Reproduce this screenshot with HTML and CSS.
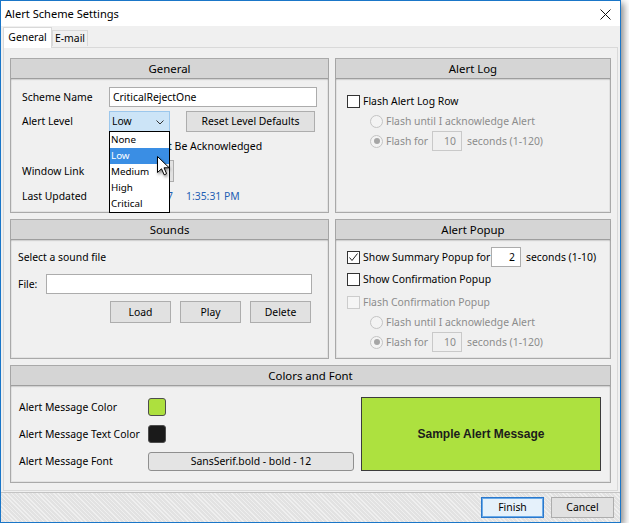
FILE: index.html
```html
<!DOCTYPE html>
<html>
<head>
<meta charset="utf-8">
<title>Alert Scheme Settings</title>
<link rel="stylesheet" href="styles.css">
</head>
<body>
<div class="window">
  <div class="titlebar">
    <span class="title">Alert Scheme Settings</span>
    <svg class="close" width="11" height="11" viewBox="0 0 11 11"><path d="M0.5 0.5 L10.5 10.5 M10.5 0.5 L0.5 10.5" stroke="#111" stroke-width="1" fill="none"/></svg>
  </div>
  <div class="tabs">
    <div class="tab active">General</div>
    <div class="tab">E-mail</div>
  </div>
  <div class="tabpanel">
    <div class="grid">
      <section class="panel">
        <div class="phead">General</div>
        <div class="gen-body">
          <span class="lbl">Scheme Name</span>
          <div class="tf name">CriticalRejectOne</div>

          <span class="lbl">Alert Level</span>
          <div class="hrow">
            <div class="combo"><span>Low</span><svg width="8" height="5" viewBox="0 0 8 5"><polyline points="0.5,0.5 4,4 7.5,0.5" fill="none" stroke="#333" stroke-width="1"/></svg></div>
            <div class="btn reset">Reset Level Defaults</div>
          </div>

          <span class="lbl"></span>
          <div class="hrow ackrow"><span class="cb"></span><span class="cbtext ack">Must Be Acknowledged</span></div>

          <span class="lbl">Window Link</span>
          <div class="hrow"><div class="btn link"></div></div>

          <span class="lbl">Last Updated</span>
          <div class="hrow blue"><span class="date">10/16/2017</span><span class="time">1:35:31 PM</span></div>
        </div>
        <div class="dropdown">
          <div class="opt">None</div>
          <div class="opt sel">Low</div>
          <div class="opt">Medium</div>
          <div class="opt">High</div>
          <div class="opt">Critical</div>
        </div>
        <svg class="cursor" width="14" height="21" viewBox="0 0 14 21"><path d="M0.5 0.5 L0.5 16.5 L4.5 12.8 L7.2 18.8 L9.6 17.7 L7 11.8 L12.2 11.8 Z" fill="#fff" stroke="#000" stroke-width="1" stroke-linejoin="miter"/></svg>
      </section>

      <section class="panel">
        <div class="phead">Alert Log</div>
        <div class="log-body">
          <div class="row r19"><span class="cb"></span><span class="cbtext">Flash Alert Log Row</span></div>
          <div class="row r19 indent mt1"><span class="rb"></span><span class="rbtext dis">Flash until I acknowledge Alert</span></div>
          <div class="row r20 indent"><span class="rb on"></span><span class="rbtext dis flashfor">Flash for</span><span class="tf small dis">10</span><span class="after dis">seconds (1-120)</span></div>
        </div>
      </section>

      <section class="panel">
        <div class="phead">Sounds</div>
        <div class="snd-body">
          <div class="row r19">Select a sound file</div>
          <div class="row r20 mt7"><span class="filelbl">File:</span><span class="tf file"></span></div>
          <div class="row r22 mt7 btnrow">
            <div class="btn sbtn">Load</div>
            <div class="btn sbtn">Play</div>
            <div class="btn sbtn">Delete</div>
          </div>
        </div>
      </section>

      <section class="panel">
        <div class="phead">Alert Popup</div>
        <div class="pop-body">
          <div class="row r20"><span class="cb checked"><svg width="11" height="11" viewBox="0 0 11 11"><polyline points="1.5,5.5 4,8.5 9.5,1.5" fill="none" stroke="#222" stroke-width="1"/></svg></span><span class="cbtext summary">Show Summary Popup for</span><span class="tf small">2</span><span class="after">seconds (1-10)</span></div>
          <div class="row r19 mt3"><span class="cb"></span><span class="cbtext">Show Confirmation Popup</span></div>
          <div class="row r19 mt4"><span class="cb dis"></span><span class="cbtext dis">Flash Confirmation Popup</span></div>
          <div class="row r19 mt1 indent"><span class="rb"></span><span class="rbtext dis">Flash until I acknowledge Alert</span></div>
          <div class="row r20 indent"><span class="rb on"></span><span class="rbtext dis flashfor">Flash for</span><span class="tf small dis">10</span><span class="after dis">seconds (1-120)</span></div>
        </div>
      </section>

      <section class="panel wide">
        <div class="phead">Colors and Font</div>
        <div class="col-body">
          <div class="col-left">
            <div class="row r18"><span class="clbl">Alert Message Color</span><span class="swatch green"></span></div>
            <div class="row r18 mt9"><span class="clbl">Alert Message Text Color</span><span class="swatch black"></span></div>
            <div class="row r19 mt9"><span class="clbl">Alert Message Font</span><div class="fontbtn">SansSerif.bold - bold - 12</div></div>
          </div>
          <div class="sample">Sample Alert Message</div>
        </div>
      </section>
    </div>
  </div>
  <div class="footer">
    <div class="btn fbtn default">Finish</div>
    <div class="btn fbtn">Cancel</div>
  </div>
</div>
</body>
</html>
```

FILE: styles.css
```css
* { box-sizing: border-box; }
html, body { margin: 0; padding: 0; background: #fff; }
body {
  font-family: "Noto Sans", "DejaVu Sans", sans-serif;
  font-size: 10.4px;
  color: #000;
  line-height: 1;
}

.window {
  width: 621px;
  height: 523px;
  border: 1px solid #1a76c8;
  background: #f0f0f0;
  box-shadow: 3px 3px 7px rgba(0, 0, 0, 0.45);
  display: flex;
  flex-direction: column;
}

.titlebar {
  height: 25px;
  flex: none;
  background: #fff;
  display: flex;
  align-items: center;
  padding: 0 9px 0 4px;
}
.title { font-size: 11.1px; }
.close { margin-left: auto; margin-top: 1px; }

.tabs {
  height: 21px;
  flex: none;
  margin: 0 2px;
  display: flex;
  align-items: flex-end;
  position: relative;
  z-index: 2;
}
.tab {
  height: 16px;
  width: 36px;
  border: 1px solid #d9d9d9;
  border-bottom: none;
  background: #f0f0f0;
  display: flex;
  align-items: center;
  justify-content: center;
  margin-bottom: 1px;
  white-space: nowrap;
}
.tab.active {
  width: 49px;
  height: 21px;
  background: #fff;
  margin-bottom: -1px;
  padding-bottom: 1px;
}

.tabpanel {
  height: 444px;
  flex: none;
  margin: 0 2px;
  border: 1px solid #d9d9d9;
  background: #f0f0f0;
  padding: 10px 6px 7px 6px;
  position: relative;
  z-index: 1;
}

.grid {
  display: grid;
  grid-template-columns: 319px 276px;
  grid-template-rows: 155px 140px 118px;
  column-gap: 6px;
  row-gap: 6px;
}

.panel {
  position: relative;
  border: 1px solid #a9a9a9;
  background: #f0f0f0;
  box-shadow: inset 0 0 0 1px #e2e2e2;
  display: flex;
  flex-direction: column;
}
.panel.wide { grid-column: 1 / span 2; }
.phead {
  height: 20px;
  flex: none;
  background: #d5d5d5;
  border-bottom: 1px solid #9e9e9e;
  box-shadow: 0 1px 1px rgba(0, 0, 0, 0.12);
  display: flex;
  align-items: center;
  justify-content: center;
  padding-top: 1px;
  font-size: 11.4px;
}

.row { display: flex; align-items: center; white-space: nowrap; }
.r18 { height: 18px; }
.r19 { height: 19px; }
.r20 { height: 20px; }
.r22 { height: 22px; }
.mt1 { margin-top: 1px; }
.mt3 { margin-top: 3px; }
.mt4 { margin-top: 4px; }
.mt7 { margin-top: 7px; }
.mt9 { margin-top: 9px; }
.indent { padding-left: 23px; }
.dis { color: #8c8c8c; }

/* controls */
.tf {
  height: 20px;
  border: 1px solid #acacac;
  background: #fff;
  padding: 0 3px;
  display: flex;
  align-items: center;
  white-space: nowrap;
}
.tf.small {
  width: 30px;
  justify-content: flex-end;
  padding-right: 5px;
  flex: none;
}
.tf.small.dis { background: #f0f0f0; border-color: #c9c9c9; }

.btn {
  background: #e1e1e1;
  border: 1px solid #adadad;
  display: flex;
  align-items: center;
  justify-content: center;
  white-space: nowrap;
}

.cb {
  width: 13px;
  height: 13px;
  flex: none;
  border: 1px solid #333;
  background: #fff;
  display: flex;
  align-items: center;
  justify-content: center;
}
.cb.dis { border-color: #cccccc; background: #f5f5f5; }
.cbtext { margin-left: 3px; }

.rb {
  width: 13px;
  height: 13px;
  flex: none;
  border-radius: 50%;
  border: 1px solid #c4c4c4;
  background: #f3f3f3;
  display: flex;
  align-items: center;
  justify-content: center;
}
.rb.on::after {
  content: "";
  width: 6px;
  height: 6px;
  border-radius: 50%;
  background: #a6a6a6;
}
.rbtext { margin-left: 3px; }
.flashfor { width: 46px; }
.after { margin-left: 5px; }

/* General panel */
.gen-body {
  display: grid;
  grid-template-columns: 87px 1fr;
  grid-template-rows: 20px 21px 20px 22px 20px;
  row-gap: 4px;
  align-items: center;
  padding: 8px 11px 0 11px;
}
.lbl { white-space: nowrap; }
.tf.name { width: 208px; padding-left: 3px; }
.hrow { display: flex; align-items: center; white-space: nowrap; height: 100%; }
.combo {
  width: 61px;
  height: 21px;
  background: #cce4f7;
  border: 1px solid #9cc7ec;
  display: flex;
  align-items: center;
  justify-content: space-between;
  padding: 0 5px 0 2px;
}
.combo svg { margin-top: 1px; }
.btn.reset { width: 129px; height: 21px; margin-left: 16px; }
.ackrow { padding-left: 21px; }
.ack { margin-left: 4px; font-size: 10.5px; }
.btn.link { width: 65px; height: 22px; }
.blue { color: #1f5fb4; }
.date { width: 64px; text-align: right; }
.time { margin-left: 13px; }

.dropdown {
  position: absolute;
  left: 98px;
  top: 72px;
  width: 61px;
  height: 82px;
  border: 1px solid #000;
  background: #fff;
  z-index: 5;
}
.opt {
  height: 16px;
  display: flex;
  align-items: center;
  padding-left: 1px;
  font-size: 9.8px;
}
.opt.sel { background: #3a8ee4; color: #fff; }

.cursor {
  position: absolute;
  left: 146px;
  top: 97px;
  z-index: 6;
  filter: drop-shadow(1px 2px 1.5px rgba(0, 0, 0, 0.45));
}

/* Alert Log */
.log-body { padding: 13px 0 0 11px; }

/* Sounds */
.snd-body { padding: 8px 16px 0 7px; }
.filelbl { width: 28px; flex: none; }
.tf.file { flex: 1; }
.btnrow { padding-left: 92px; gap: 9px; }
.btn.sbtn { width: 61px; height: 22px; }

/* Alert Popup */
.pop-body { padding: 7px 0 0 11px; }
.summary { width: 128px; }

/* Colors and Font */
.col-body { display: flex; padding: 11px 9px 0 8px; }
.col-left { width: 335px; margin-top: 1px; }
.clbl { width: 129px; flex: none; }
.swatch {
  width: 18px;
  height: 18px;
  border-radius: 3px;
  border: 1px solid #4d4d4d;
}
.swatch.green { background: #ade03e; }
.swatch.black { background: #1a1a1a; }
.fontbtn {
  width: 206px;
  height: 19px;
  border: 1px solid #8f8f8f;
  border-radius: 3px;
  background: #e4e4e4;
  display: flex;
  align-items: center;
  justify-content: center;
}
.sample {
  width: 240px;
  height: 74px;
  margin-left: 7px;
  background: #ade13f;
  border: 1px solid #3c3c3c;
  display: flex;
  align-items: center;
  justify-content: center;
  font-family: "Liberation Sans", Arial, sans-serif;
  font-weight: bold;
  font-size: 12px;
  color: #1c1c1c;
}

/* footer */
.footer {
  height: 30px;
  flex: none;
  margin-top: 1px;
  border-top: 1px solid #c3c3c3;
  background-color: #e2e2e2;
  background-image: repeating-linear-gradient(45deg, rgba(255, 255, 255, 0.45) 0 1px, transparent 1px 3px);
  display: flex;
  justify-content: flex-end;
  align-items: flex-start;
  gap: 7px;
  padding: 4px 6px 0 0;
}
.btn.fbtn { width: 63px; height: 21px; }
.btn.fbtn.default {
  background: #e5f1fb;
  border: 1px solid #2a78cc;
  box-shadow: inset 0 0 0 1px #6aaae8;
}
```
